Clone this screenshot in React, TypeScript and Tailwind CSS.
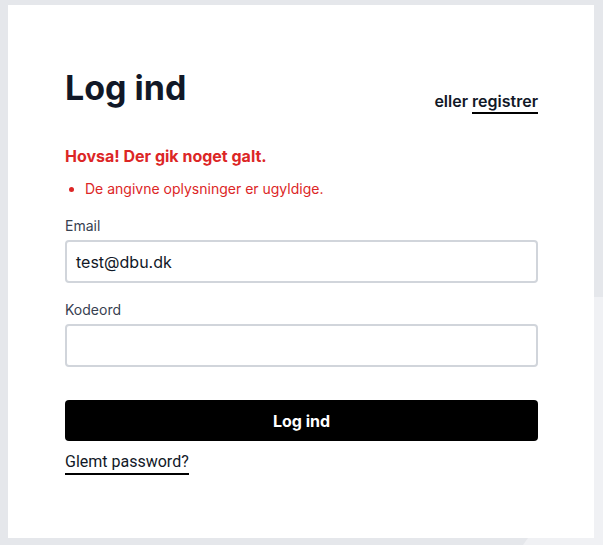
import React from "react";

export default function App() {
  return (
    <div
      className="relative h-[545px] w-full overflow-hidden bg-[#e5e7eb] pl-[8px] pr-[9px] pt-[5px]"
      style={{ fontFamily: "Inter, 'Noto Sans', sans-serif" }}
    >
      <div
        className="absolute inset-0 bg-[#f0f1f4]"
        style={{
          clipPath:
            "polygon(523px 545px, 603px 545px, 603px 297px, 594px 297px, 594px 538px, 528px 538px)",
        }}
      />
      <div className="relative h-[533px] bg-white pl-[57px] pr-[56px] pt-[63px]">
        <div className="flex items-start justify-between">
          <h1 className="text-[34px] font-bold leading-[40px] text-[#111827]">Log ind</h1>
          <div className="mt-[22px] text-base font-semibold leading-[22px] text-[#111827]">
            eller{" "}
            <a href="#" className="inline-block border-b-2 border-black">
              registrer
            </a>
          </div>
        </div>

        <p className="mt-[30px] text-base font-bold leading-6 text-[#dc2626]">
          Hovsa! Der gik noget galt.
        </p>
        <ul className="mt-[11px] list-disc pl-[20px] text-sm leading-5 text-[#dc2626]">
          <li>De angivne oplysninger er ugyldige.</li>
        </ul>

        <div className="mt-[17px]">
          <label className="block text-sm leading-5 text-[#374151]">Email</label>
          <div className="mt-[4px] flex h-[43px] items-center rounded border-2 border-[#d1d5db] px-[9px] text-base text-[#111827]">
            test@dbu.dk
          </div>
        </div>

        <div className="mt-[17px]">
          <label className="block text-sm leading-5 text-[#374151]">Kodeord</label>
          <div className="mt-[4px] h-[43px] rounded border-2 border-[#d1d5db]" />
        </div>

        <button className="mt-[33px] flex h-[41px] w-full items-center justify-center rounded bg-black text-base font-bold text-white">
          Log ind
        </button>

        <a
          href="#"
          className="mt-[10px] inline-block border-b-2 border-black text-base leading-[22px] text-[#111827]"
          style={{ fontFamily: "Roboto, 'Noto Sans', sans-serif" }}
        >
          Glemt password?
        </a>
      </div>
    </div>
  );
}
